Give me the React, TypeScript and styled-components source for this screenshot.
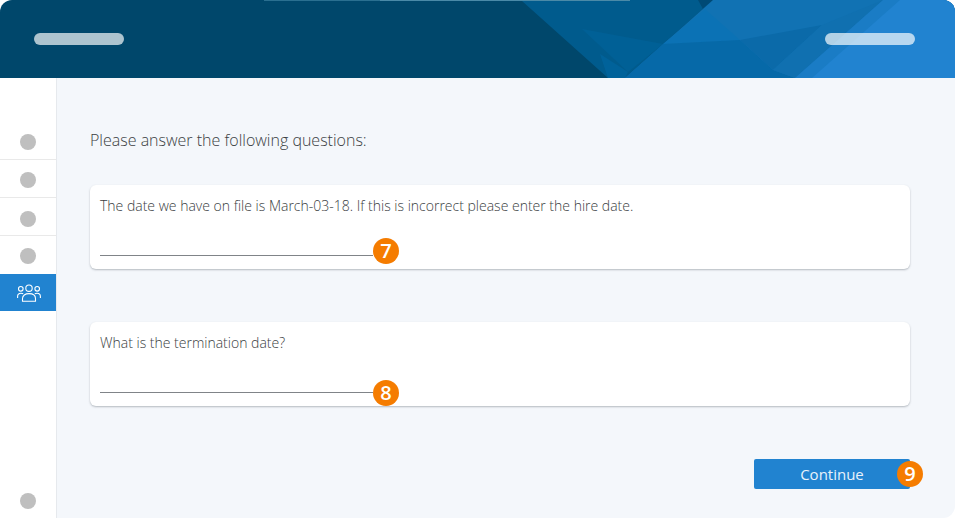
import styled, { createGlobalStyle } from "styled-components";

const GlobalStyle = createGlobalStyle`
    html, body {
        margin: 0;
        padding: 0;
        background-color: #ffffff;
    }
    * {
        box-sizing: border-box;
    }
`;

const Page = styled.div`
    width: 955px;
    height: 518px;
    display: flex;
    flex-direction: column;
    overflow: hidden;
    border-radius: 12px;
    font-family: "Open Sans", sans-serif;
    color: #3a3e42;
`;

const Header = styled.header`
    position: relative;
    height: 78px;
    flex-shrink: 0;
    display: flex;
    justify-content: space-between;
    align-items: flex-start;
    padding: 33px 40px 0 34px;
    background-color: #00476b;
`;

const HeaderArt = styled.svg`
    position: absolute;
    top: 0;
    left: 0;
`;

const Pill = styled.div`
    position: relative;
    width: 90px;
    height: 12px;
    border-radius: 6px;
    background-color: rgba(255, 255, 255, 0.68);
`;

const Body = styled.div`
    flex: 1;
    display: flex;
    min-height: 0;
`;

const Sidebar = styled.nav`
    width: 57px;
    flex-shrink: 0;
    display: flex;
    flex-direction: column;
    padding-top: 44px;
    padding-bottom: 1px;
    background-color: #ffffff;
    border-right: 1px solid #e6e9ed;
`;

const NavItem = styled.div<{ $active?: boolean; $height: number; $plain?: boolean }>`
    height: ${(props) => props.$height}px;
    display: flex;
    align-items: center;
    justify-content: center;
    background-color: ${(props) => (props.$active ? "#2183d0" : "transparent")};
    border-bottom: ${(props) => (props.$plain || props.$active ? "none" : "1px solid #e9e9e9")};
`;

const Dot = styled.span<{ $nudge?: number }>`
    width: 16px;
    height: 16px;
    margin-top: ${(props) => props.$nudge ?? 0}px;
    border-radius: 50%;
    background-color: #bfbfbf;
`;

const IconSvg = styled.svg`
    margin-left: 1px;
`;

const Spacer = styled.div`
    flex: 1;
`;

const Main = styled.main`
    flex: 1;
    display: flex;
    flex-direction: column;
    padding: 51px 45px 0 33px;
    background-color: #f4f7fb;
`;

const Heading = styled.h1`
    margin: 0 0 34px;
    height: 22px;
    font-size: 16px;
    line-height: 22px;
    font-weight: 300;
`;

const Card = styled.section`
    height: 84px;
    margin-bottom: 53px;
    padding: 12px 10px 0;
    background-color: #ffffff;
    border-radius: 6px;
    box-shadow: 0 1px 2px rgba(90, 100, 110, 0.42);
`;

const Question = styled.p`
    margin: 0 0 40px;
    height: 18px;
    font-size: 14px;
    line-height: 18px;
    font-weight: 300;
`;

const AnswerLine = styled.div`
    position: relative;
    width: 273px;
    height: 1px;
    background-color: #808488;
`;

const Badge = styled.span`
    position: absolute;
    width: 26px;
    height: 26px;
    border-radius: 50%;
    display: flex;
    align-items: center;
    justify-content: center;
    background-color: #f57c00;
    color: #ffffff;
    font-size: 20px;
    font-weight: 600;
    line-height: 1;
`;

const LineBadge = styled(Badge)<{ $top: number }>`
    right: -26px;
    top: ${(props) => props.$top}px;
`;

const Footer = styled.div`
    display: flex;
    justify-content: flex-end;
`;

const ContinueButton = styled.button`
    position: relative;
    width: 156px;
    height: 30px;
    padding: 0;
    border: none;
    border-radius: 2px;
    background-color: #2183d0;
    color: #e8f2fb;
    font-family: inherit;
    font-size: 15px;
    cursor: pointer;
`;

const ButtonBadge = styled(Badge)`
    right: -13px;
    top: 2px;
`;

const questions = [
    { id: 7, badgeTop: -17, text: "The date we have on file is March-03-18. If this is incorrect please enter the hire date." },
    { id: 8, badgeTop: -12, text: "What is the termination date?" },
];

function PeopleIcon() {
    return (
        <IconSvg width="24" height="18" viewBox="0 0 24 18" fill="none" stroke="#ffffff" strokeWidth="1.1">
            <circle cx="12" cy="4.2" r="3.2" />
            <circle cx="3.8" cy="4.8" r="2.3" />
            <circle cx="20.2" cy="4.8" r="2.3" />
            <path d="M5.5 17.2v-2.6c0-3 2.6-5 6.5-5s6.5 2 6.5 5v2.6z" />
            <path d="M0.6 14v-1.6c0-2 1.4-3.2 3.4-3.2 0.9 0 1.6 0.2 2.2 0.6" />
            <path d="M23.4 14v-1.6c0-2-1.4-3.2-3.4-3.2-0.9 0-1.6 0.2-2.2 0.6" />
        </IconSvg>
    );
}

function App() {
    return (
        <>
            <GlobalStyle />
            <Page>
                <Header>
                    <HeaderArt width="955" height="78" viewBox="0 0 955 78">
                        <polygon points="264,0 380,0 380,1 264,1" fill="#2a6f90" />
                        <polygon points="380,0 630,0 630,1 380,1" fill="#4a8aa8" />
                        <polygon points="522,1 630,1 630,0 713,0 625,78 608,78" fill="#005b8d" />
                        <polygon points="582,29 663,44 628,72" fill="#006096" />
                        <polygon points="600,54 628,72 625,78 608,78" fill="#00629a" />
                        <polygon points="698,0 713,0 703,9" fill="#004a75" />
                        <polygon points="713,0 955,0 955,78 625,78" fill="#1172b3" />
                        <polygon points="705,9 740,40 663,44" fill="#0b72b5" />
                        <polygon points="663,44 740,40 773,70 795,78 625,78" fill="#0669a8" />
                        <polygon points="740,40 822,25 773,70" fill="#0b6aa9" />
                        <polygon points="822,25 883,0 795,78 773,70" fill="#1070b0" />
                        <polygon points="883,0 955,0 955,78 795,78" fill="#1a7cc5" />
                        <polygon points="900,0 955,0 955,78 812,78" fill="#2183d0" />
                    </HeaderArt>
                    <Pill />
                    <Pill />
                </Header>
                <Body>
                    <Sidebar>
                        <NavItem $height={38}><Dot $nudge={2} /></NavItem>
                        <NavItem $height={38}><Dot $nudge={2} /></NavItem>
                        <NavItem $height={38}><Dot $nudge={4} /></NavItem>
                        <NavItem $height={38} $plain><Dot $nudge={2} /></NavItem>
                        <NavItem $height={37} $active><PeopleIcon /></NavItem>
                        <Spacer />
                        <NavItem $height={32} $plain><Dot /></NavItem>
                    </Sidebar>
                    <Main>
                        <Heading>Please answer the following questions:</Heading>
                        {questions.map((question) => (
                            <Card key={question.id}>
                                <Question>{question.text}</Question>
                                <AnswerLine>
                                    <LineBadge $top={question.badgeTop}>{question.id}</LineBadge>
                                </AnswerLine>
                            </Card>
                        ))}
                        <Footer>
                            <ContinueButton>
                                Continue
                                <ButtonBadge>9</ButtonBadge>
                            </ContinueButton>
                        </Footer>
                    </Main>
                </Body>
            </Page>
        </>
    );
}

export default App;
